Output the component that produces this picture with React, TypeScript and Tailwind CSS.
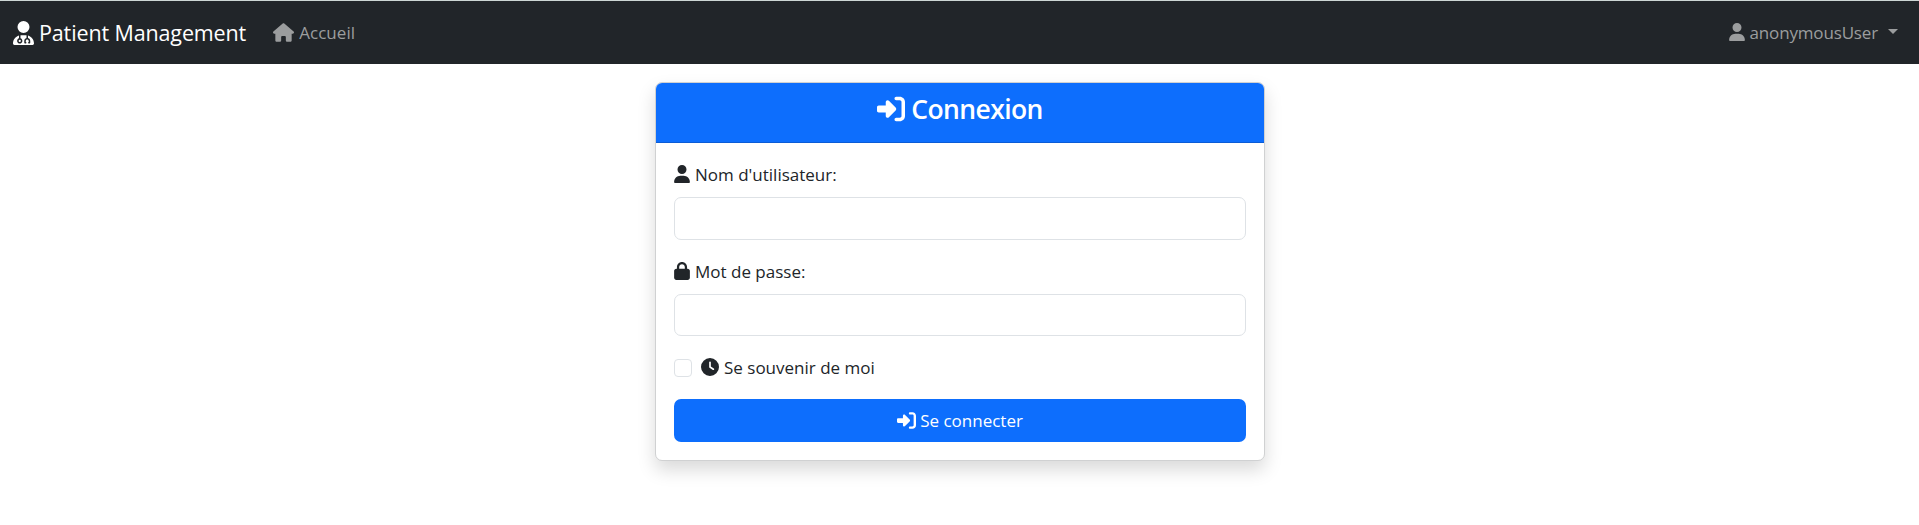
import type { ReactNode } from "react";
import { FaClock, FaHouse, FaLock, FaRightToBracket, FaUser, FaUserDoctor } from "react-icons/fa6";

function Navbar() {
  return (
    <nav className="flex h-16 items-center border-t border-[#cdd6d4] bg-[#212529] pl-[13px] pr-[21px]">
      <a className="flex items-center text-white">
        <FaUserDoctor className="mr-[5px] h-6 w-[21px]" />
        <span className="text-[21.5px] leading-[33px] tracking-[-0.13px]">Patient Management</span>
      </a>
      <a className="ml-[27px] flex items-center text-[#9b9d9e]">
        <FaHouse className="mr-[5px] h-[19px] w-[21px]" />
        <span className="text-[17px] leading-[26px] tracking-[0.05px]">Accueil</span>
      </a>
      <a className="ml-auto flex items-center text-[#9b9d9e]">
        <FaUser className="mb-[2px] mr-[5px] h-[18px] w-[16px]" />
        <span className="text-[17px] leading-[26px] tracking-[-0.16px]">anonymousUser</span>
        <span className="ml-[10px] mt-[-2px] border-x-[5px] border-t-[5px] border-x-transparent border-t-[#9b9d9e]" />
      </a>
    </nav>
  );
}

function Field({ id, icon, label, type, inputHeight }: { id: string; icon: ReactNode; label: string; type: string; inputHeight: string }) {
  return (
    <div className="mb-[18px]">
      <label htmlFor={id} className="mb-[9px] flex h-[27px] items-center gap-[5px]">
        {icon}
        <span className="text-[17px] leading-[26px]">{label}</span>
      </label>
      <input id={id} type={type} className={`block w-full rounded-[7px] border border-[#dee2e6] bg-white px-3 outline-none ${inputHeight}`} />
    </div>
  );
}

export default function App() {
  return (
    <div className="min-h-[525px] bg-white font-['Open_Sans','Noto_Sans',sans-serif] text-[#212529]">
      <Navbar />
      <main className="flex justify-center pl-px pt-[18px]">
        <section className="h-[379px] w-[610px] rounded-[7px] border border-[#d0d1d2] bg-white shadow-[0_9px_18px_rgba(0,0,0,0.15)]">
          <header className="flex h-[60px] justify-center rounded-t-[6px] border-b border-[#0b5cd6] bg-[#0d6efd] pt-[9px] text-white">
            <h3 className="flex h-[34px] items-center gap-[6px]">
              <FaRightToBracket className="h-7 w-7" />
              <span className="text-[26.5px] font-semibold leading-[34px] tracking-[-0.6px]">Connexion</span>
            </h3>
          </header>
          <form className="px-[18px] pt-[18px]">
            <Field id="username" type="text" label="Nom d'utilisateur:" inputHeight="h-[43px]" icon={<FaUser className="mb-[2px] h-[18px] w-[16px]" />} />
            <Field id="password" type="password" label="Mot de passe:" inputHeight="h-[42px]" icon={<FaLock className="mb-[2px] h-[18px] w-[16px]" />} />
            <div className="mb-[18px] flex h-[27px] items-center">
              <input id="remember" type="checkbox" className="mr-[9px] size-[18px] appearance-none rounded-[4px] border border-[#dee2e6] bg-white" />
              <label htmlFor="remember" className="flex items-center gap-[5px]">
                <FaClock className="mb-[2px] size-[18px]" />
                <span className="text-[17px] leading-[26px]">Se souvenir de moi</span>
              </label>
            </div>
            <button type="button" className="flex h-[43px] w-full items-center justify-center gap-[4px] rounded-[7px] bg-[#0d6efd] text-white">
              <FaRightToBracket className="h-[19px] w-[19px]" />
              <span className="text-[17px] leading-[26px]">Se connecter</span>
            </button>
          </form>
        </section>
      </main>
    </div>
  );
}
